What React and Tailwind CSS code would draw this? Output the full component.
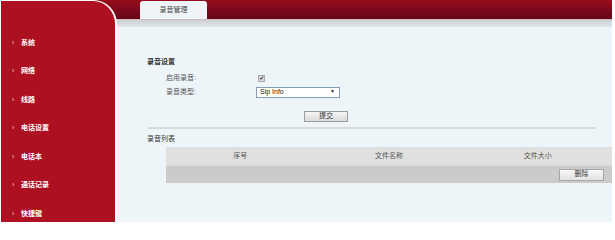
const cjk = { fontFamily: '"Liberation Sans", "Noto Sans CJK SC", sans-serif' };

const menu = ["系统", "网络", "线路", "电话设置", "电话本", "通话记录", "快捷键"];

const Sidebar = () => (
    <div className="w-[117px] shrink-0 bg-[linear-gradient(to_bottom,#960d1c_0px,#65061a_19px,#cfd5d8_19px,#dde3e6_27px,#eef5f8_27px)]">
        <div className="h-full bg-[#ad1021] rounded-tr-[24px] border-t border-l border-r-2 border-white pt-[27.5px]">
            {menu.map((item) => (
                <div key={item} className="h-[28.5px] flex items-center pl-[11px] text-white">
                    <span className="text-[7px] text-[#f4c9cf] w-[9px]">›</span>
                    <span className="text-[7px] font-bold">{item}</span>
                </div>
            ))}
        </div>
    </div>
);

const FormRow = ({ label, children, className }) => (
    <div className={"flex items-center h-[12px] " + className}>
        <div className="w-[49px] text-right text-[7px] text-[#555]">{label}</div>
        <div className="ml-[60px] flex items-center">{children}</div>
    </div>
);

const App = () => {
    return (
        <div className="w-[615px] h-[222px] bg-white flex overflow-hidden" style={cjk}>
            <div className="w-[612px] h-full flex">
                <Sidebar />
                <div className="flex-1 flex flex-col">
                    <div className="h-[19px] bg-gradient-to-b from-[#960d1c] to-[#66061a] flex items-end pl-[23px]">
                        <div className="w-[67px] h-[18px] rounded-t-[3px] bg-[#eef4f7] flex items-center justify-center text-[7px] text-[#444]">
                            录音管理
                        </div>
                    </div>
                    <div className="h-[8px] bg-gradient-to-b from-[#cbd1d4] to-[#dfe5e8] border-t border-[#d2bcc1]" />
                    <div className="flex-1 bg-[#eef5f8] pl-[30px] flex flex-col">
                        <div className="mt-[30px] h-[10px] leading-[10px] text-[7px] font-bold text-[#333]">录音设置</div>

                        <FormRow label="启用录音:" className="mt-[5px]">
                            <span className="ml-[2px] w-[7px] h-[7px] bg-[#d4d4d4] border border-[#aaa] flex items-center justify-center">
                                <svg viewBox="0 0 8 8" className="w-[6px] h-[6px]">
                                    <path d="M1.5 4.2 L3.2 6 L6.6 1.8" fill="none" stroke="#222" strokeWidth="1.4" />
                                </svg>
                            </span>
                        </FormRow>

                        <FormRow label="录音类型:" className="mt-[2px]">
                            <div className="w-[84px] h-[11px] bg-white border border-[#7f9db9] flex items-center justify-between pl-[3px] pr-[4px]">
                                <span className="text-[7px] text-[#222]" style={{ fontFamily: '"Liberation Sans", sans-serif' }}>Sip Info</span>
                                <span className="text-[5px] text-[#222]">▼</span>
                            </div>
                        </FormRow>

                        <div className="mt-[13px] ml-[157px] w-[44px] h-[11px] border border-[#9c9c9c] bg-gradient-to-b from-[#f6f6f6] to-[#dadada] flex items-center justify-center text-[7px] text-[#333]">
                            提交
                        </div>

                        <div className="mt-[5px] ml-[1px] w-[448px] h-[2px] bg-[#d6dadc]" />

                        <div className="mt-[5px] h-[10px] leading-[10px] text-[7px] text-[#333]">录音列表</div>

                        <div className="mt-[3px] ml-[18px] border-l border-[#f4f4f4]">
                            <div className="h-[18px] bg-[#e0e0e0] grid grid-cols-3 items-center text-center text-[7px] text-[#555]">
                                <span>序号</span>
                                <span>文件名称</span>
                                <span>文件大小</span>
                            </div>
                            <div className="h-[18px] bg-[#cbcbcb] border-t border-[#d8d8d8] flex items-center justify-end pr-[8px]">
                                <div className="w-[45px] h-[12px] border border-[#a8a8a8] bg-gradient-to-b from-[#f8f8f8] to-[#e2e2e2] flex items-center justify-center text-[7px] text-[#333]">
                                    删除
                                </div>
                            </div>
                        </div>
                    </div>
                </div>
            </div>
        </div>
    );
};

export default App;
